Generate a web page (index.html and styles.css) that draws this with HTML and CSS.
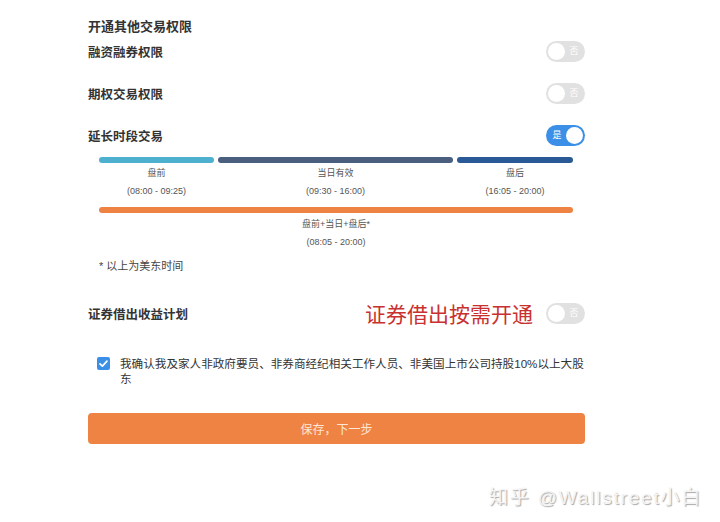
FILE: index.html
```html
<!DOCTYPE html>
<html lang="zh-CN">
<head>
<meta charset="utf-8">
<title>开通其他交易权限</title>
<link rel="stylesheet" href="styles.css">
</head>
<body>
<div class="page">
  <div class="title">开通其他交易权限</div>

  <div class="row first">
    <span class="label">融资融券权限</span>
    <span class="switch off"><span class="knob"></span><span class="txt">否</span></span>
  </div>

  <div class="row">
    <span class="label">期权交易权限</span>
    <span class="switch off"><span class="knob"></span><span class="txt">否</span></span>
  </div>

  <div class="row">
    <span class="label">延长时段交易</span>
    <span class="switch on"><span class="txt">是</span><span class="knob"></span></span>
  </div>

  <div class="timeline">
    <div class="segs">
      <div class="seg">
        <div class="bar pre"></div>
        <div class="lbl">盘前</div>
        <div class="time">(08:00 - 09:25)</div>
      </div>
      <div class="seg">
        <div class="bar day"></div>
        <div class="lbl">当日有效</div>
        <div class="time">(09:30 - 16:00)</div>
      </div>
      <div class="seg">
        <div class="bar post"></div>
        <div class="lbl">盘后</div>
        <div class="time">(16:05 - 20:00)</div>
      </div>
    </div>
    <div class="seg full">
      <div class="bar all"></div>
      <div class="lbl lbl-all">盘前+当日+盘后*</div>
      <div class="time">(08:05 - 20:00)</div>
    </div>
    <div class="note">* 以上为美东时间</div>
  </div>

  <div class="row loan">
    <span class="label">证券借出收益计划</span>
    <span class="right">
      <span class="red">证券借出按需开通</span>
      <span class="switch off"><span class="knob"></span><span class="txt">否</span></span>
    </span>
  </div>

  <div class="agree">
    <span class="cb"><svg width="13" height="13" viewBox="0 0 13 13"><path d="M3 6.8 L5.4 9.1 L10 4.2" fill="none" stroke="#fff" stroke-width="1.7" stroke-linecap="round" stroke-linejoin="round"/></svg></span>
    <p class="agree-text">我确认我及家人非政府要员、非券商经纪相关工作人员、非美国上市公司持股10%以上大股东</p>
  </div>

  <button class="btn">保存，下一步</button>
</div>
<div class="watermark">知乎 @Wallstreet小白</div>
</body>
</html>
```

FILE: styles.css
```css
html, body {
  margin: 0;
  padding: 0;
  background: #ffffff;
}
body {
  font-family: "Liberation Sans", "Noto Sans CJK SC", sans-serif;
  color: #333;
  width: 720px;
  height: 522px;
  overflow: hidden;
  position: relative;
}
.page {
  width: 497px;
  padding: 18px 0 0 88px;
}
.title {
  font-size: 13px;
  line-height: 18px;
  height: 18px;
  font-weight: 700;
  color: #333;
}
.row {
  height: 22px;
  margin-top: 20px;
  display: flex;
  align-items: center;
  justify-content: space-between;
}
.row.first {
  margin-top: 4px;
}
.label {
  font-size: 12.5px;
  font-weight: 700;
  color: #333;
}
.switch {
  width: 39px;
  height: 21px;
  border-radius: 11px;
  display: flex;
  align-items: center;
  box-sizing: border-box;
  padding: 0 2px;
}
.switch.off {
  background: #e1e1e1;
}
.switch.on {
  background: #3b8fe6;
}
.knob {
  width: 17px;
  height: 17px;
  border-radius: 50%;
  background: #fff;
  flex: none;
}
.switch.on .knob {
  box-shadow: 0 0 0 1px #3b8fe6;
}
.txt {
  flex: 1;
  text-align: center;
  font-size: 9px;
  line-height: 1;
  color: #fff;
}
.timeline {
  margin-top: 11px;
  padding: 0 12px 0 11px;
}
.segs {
  display: grid;
  grid-template-columns: 115fr 235fr 116fr;
  column-gap: 4px;
}
.seg {
  text-align: center;
}
.bar {
  height: 6px;
  border-radius: 3px;
}
.bar.pre { background: #4eb0cf; }
.bar.day { background: #4a5f7d; }
.bar.post { background: #2a5a96; }
.bar.all { background: #ee8344; }
.full {
  margin-top: 10px;
}
.lbl {
  margin-top: 4px;
  font-size: 9px;
  line-height: 12px;
  color: #555;
}
.lbl-all {
  margin-top: 5px;
}
.time {
  margin-top: 6px;
  font-size: 9px;
  line-height: 12px;
  color: #555;
}
.note {
  margin-top: 11px;
  font-size: 11px;
  line-height: 14px;
  color: #444;
}
.row.loan {
  margin-top: 29px;
}
.right {
  display: flex;
  align-items: center;
  gap: 13px;
}
.red {
  font-family: "Noto Sans CJK SC", sans-serif;
  font-size: 21px;
  line-height: 22px;
  color: #c8312f;
}
.agree {
  margin-top: 32px;
  display: flex;
  align-items: flex-start;
  padding-left: 9px;
}
.cb {
  width: 13px;
  height: 13px;
  margin-top: 1px;
  border-radius: 2px;
  background: #3b8fe6;
  display: flex;
  flex: none;
}
.agree-text {
  margin: 0 0 0 10px;
  font-size: 11.6px;
  line-height: 15px;
  color: #333;
}
.btn {
  display: block;
  width: 100%;
  height: 31px;
  margin-top: 27px;
  border: none;
  border-radius: 4px;
  background: #ef8344;
  color: #fde6d6;
  font-family: "Noto Sans CJK SC", sans-serif;
  font-size: 12px;
  padding: 0;
}
.watermark {
  position: absolute;
  left: 489px;
  top: 482px;
  font-family: "Liberation Sans", "Noto Sans CJK SC", sans-serif;
  font-size: 19px;
  letter-spacing: 1.8px;
  color: #f4f4f4;
  text-shadow: 1px 1px 1px rgba(0, 0, 0, 0.35);
  white-space: nowrap;
}
```
